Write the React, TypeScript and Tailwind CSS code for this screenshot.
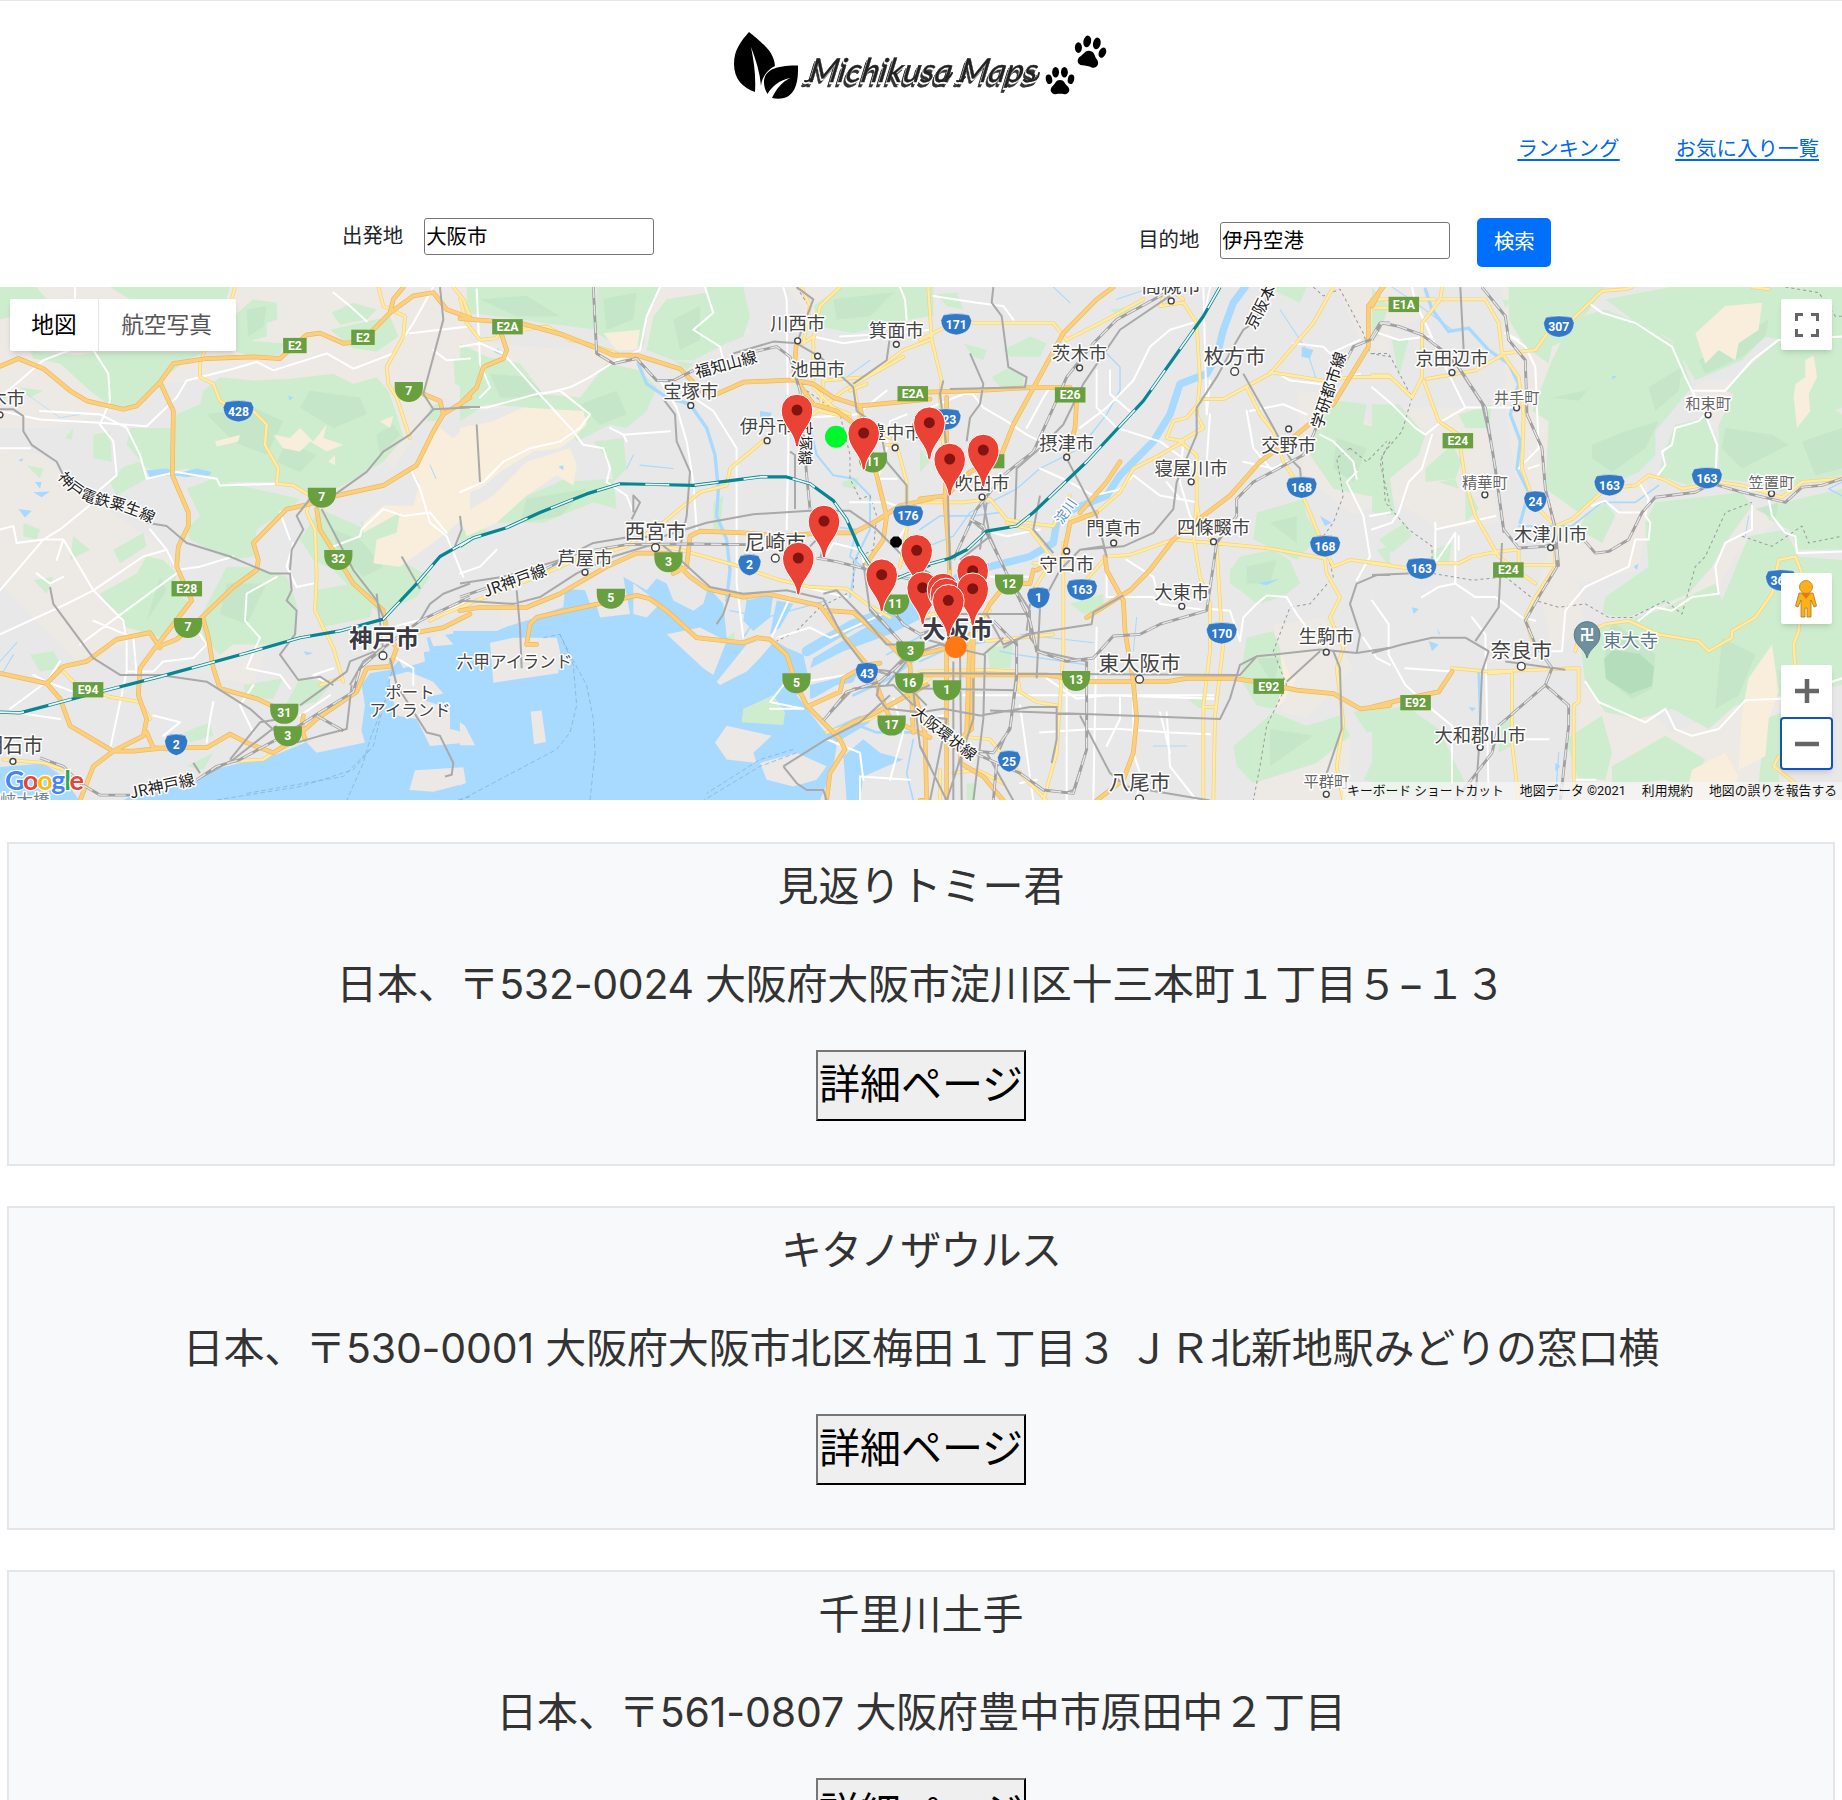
import React from "react";

type Tile = {
  x: number;
  parks?: string[];
  shade?: string[];
  sand?: string[];
  rural?: string[];
  water?: string[];
  islands?: string[];
  greenIslands?: string[];
  streams?: [string, number][];
  white?: string[];
  yellow?: string[];
  orange?: string[];
  rail?: string[];
  jr?: string[];
  teal?: string[];
  border?: string[];
  ferry?: string[];
};

/* Each tile has its own drawing grid: 3 units per pixel across, 2.955 down. */
const tiles: Tile[] = [
  {
    x: 0,
    rural: [
      "0,20 1410,20 1410,160 1330,330 1180,560 900,300 620,300 470,310 420,370 150,440 0,440",
      "0,500 130,520 260,640 500,800 560,1000 420,1060 230,1130 0,900",
      "660,1060 800,1090 760,1200 660,1180",
      "1230,150 1410,90 1410,380 1270,330",
    ],
    parks: [
      "90,212 240,225 300,215 430,215 620,215 560,240 480,300 440,360 400,380 330,375 270,330 180,250 100,235",
      "610,330 660,290 760,300 870,295 1000,280 1060,310 1130,290 1165,330 1190,400 1210,470 1150,540 1100,570 1010,620 930,630 830,600 650,600 560,560 510,570 440,560 380,490 390,440 520,440 530,400 600,370",
      "700,110 760,60 830,70 832,120 800,130 800,170 760,180 740,205 708,190",
      "0,24 110,24 140,60 40,110 0,120", "330,24 690,24 680,60 600,100 520,70 400,66",
      "995,100 1060,70 1130,90 1100,120 1020,135", "990,150 1170,110 1195,170 1130,215 1060,205",
      "710,180 850,190 840,225 760,230 708,215",
      "0,330 20,350 0,370", "60,320 130,330 90,350", "280,460 330,450 335,540 280,530", "195,470 220,440 215,475",
      "330,600 370,555 420,540 440,590 350,640", "80,550 130,560 120,590", "70,720 120,740 110,770 70,760",
      "560,620 640,590 720,610 900,650 880,670 770,740 760,820 690,830 570,770 560,740 600,700",
      "300,930 410,870 440,820 490,830 530,870 520,920 570,960 490,1060 380,1030 330,970",
      "600,1000 680,850 770,850 860,880 890,960 890,1050 830,1080 700,1080 660,1110 610,1060",
      "900,770 960,680 1100,740 1180,820 1290,880 1250,940 1140,990 1070,930 1000,860 940,830",
      "940,920 1060,900 1120,960 1110,1000 960,1030", "1080,720 1210,670 1290,690 1250,760 1130,770",
      "100,890 160,880 140,930", "220,760 270,800 210,830", "340,800 430,750 440,790 360,840",
      "90,1110 160,1100 190,1150 120,1160", "560,1440 640,1400 610,1450", "550,1340 630,1310 640,1350 570,1370",
      "730,1200 850,1180 820,1240 740,1240", "850,1270 900,1180 1000,1190 950,1250", "1360,230 1400,250 1410,330 1365,310",
      "1290,380 1330,360 1330,420 1280,420",
    ],
    shade: [
      "620,400 760,380 850,420 800,520 700,480", "930,330 1080,350 1100,400 1000,440 900,380", "740,90 800,80 790,140 745,170",
      "680,900 800,900 740,1020 660,990", "1130,460 1180,430 1200,460 1140,520", "480,880 500,920 440,1010", "860,480 950,520 900,570 830,540",
      "1000,740 1080,770 1150,850 1090,880 1010,800",
    ],
    sand: [
      "1280,470 1320,440 1360,470 1410,430 1410,690 1350,740 1300,780 1270,800 1200,850 1120,840 1130,770 1190,750 1200,690 1090,750 1090,720 1150,670 1240,670 1260,600 1230,560 1270,520",
      "820,460 870,470 900,440 940,480 980,430 970,470 1030,490 980,510 930,480 900,510 850,500", "645,480 720,460 715,480 650,495",
      "985,540 1005,520 1005,550", "1140,420 1180,405 1170,440",
    ],
    water: [
      "0,1442 130,1432 190,1470 250,1560 0,1560",
      "330,1560 400,1525 590,1482 640,1450 720,1430 830,1405 920,1368 1020,1355 1085,1330 1095,1260 1085,1200 1110,1165 1170,1155 1215,1110 1290,1100 1280,1060 1410,1040 1430,1040 1430,1600 300,1600",
      "440,565 500,560 530,575 590,560 635,570 630,580 560,585 510,580 450,588",
      "105,600 125,600 120,620", "100,630 150,628 125,645", "55,680 95,685 75,705", "55,535 70,530 65,540", "865,345 880,350 868,360", "910,1100 940,1105 920,1112",
    ],
    islands: [
      "1165,1175 1225,1160 1300,1190 1330,1225 1260,1240 1350,1270 1350,1330 1395,1340 1405,1370 1290,1380 1250,1300 1190,1290",
      "1245,1452 1390,1443 1398,1490 1300,1515 1228,1510",
      "920,1370 1080,1320 1095,1370 950,1400", "1290,1060 1330,1045 1360,1080 1300,1085", "1190,1115 1270,1095 1275,1130 1210,1150",
    ],
    streams: [["1290,550 1308,590", 3], ["80,340 180,410 240,400", 2], ["40,1110 10,1160", 3], ["50,1075 0,1130", 3]],
    white: [
      "225,24 225,60 280,210 325,280 330,360 300,430 340,480 350,580 290,630 280,660 180,740 130,770 190,770 280,920 370,1010 380,1070 380,1160 330,1390",
      "0,350 60,300 130,240 210,210", "0,390 120,415 300,425 440,435 530,350 560,300 700,265 770,245 820,270 980,220 1060,265 1180,220 1240,130 1300,24",
      "120,390 300,400 380,440 420,520 440,590", "0,740 40,730 50,780 130,770 0,920", "280,920 430,820 500,800 450,740", "280,920 200,960 0,1050",
      "500,800 530,860 600,850 700,820", "440,590 530,570 650,590 660,610 830,605", "190,770 170,830", "110,870 150,900 190,880",
      "830,880 740,930 735,1010 780,1060 740,1150 840,1170 870,1210", "880,780 860,850 890,910 940,900", "870,770 840,690 880,670",
      "180,1130 140,1190 30,1270", "100,1170 140,1190 220,1220 420,1250", "380,1160 460,1160 490,1130 580,1120 620,1080 600,1050",
      "40,1280 180,1300", "460,1290 540,1310 490,1350", "1230,560 1260,620 1290,720 1340,760 1390,880",
      "1000,790 1080,760 1085,740 1150,680 1210,700 1290,690 1340,750", "1190,1120 1240,1150 1240,1200", "1000,1150 940,1170 990,1200",
      "530,870 350,1000 240,1080", "280,1010 400,1060 410,1170", "0,500 90,500", "1300,210 1340,240 1410,235", "1230,160 1410,140", "1000,40 1050,80 1100,125",
      "640,1250 630,1300 620,1370", "760,1200 720,1260 760,1340", "1190,1025 1290,1000 1390,960", "900,1290 990,1230",
    ],
    yellow: [
      "705,24 690,80 640,140 600,250 600,290 640,310 660,360 690,380 760,390 800,430 795,490 835,560 830,605 880,610 930,640",
      "1135,24 1150,80 1215,110 1210,170 1160,260 1165,310 1190,350 1230,470", "930,640 920,690 945,740 950,880 945,980 1000,1090 1030,1190",
      "180,1150 230,1200 330,1235 420,1250 450,1300", "10,1420 130,1430 190,1450", "700,1425 790,1420 850,1380", "1360,24 1390,60 1410,110",
      "1020,1180 960,1200", "1410,960 1330,990 1290,1010",
    ],
    orange: [
      "0,258 55,235 130,265 210,330 260,360 370,385 410,375 480,305 520,250 620,235 760,230 840,235 920,165 960,160 1030,190 1090,185 1120,150 1170,100 1240,50 1300,40 1340,90 1410,115",
      "480,305 520,390 517,580 565,690 565,730 535,790 530,850 575,950 520,1020 465,1090 420,1150 415,1230 440,1300 430,1350 340,1395 400,1395 500,1385 620,1385 690,1345 740,1370 820,1400 870,1370 950,1300 1070,1220 1100,1150 1170,1145 1190,1090",
      "340,1395 280,1440 240,1541", "0,1165 140,1195 180,1240 210,1320 330,1390", "140,1195 190,1145 260,1130 350,1065 450,1045 480,1090",
      "465,1090 530,1065 600,1005 700,910 770,860 775,830 760,780 860,680 930,665 1010,640 1150,610 1250,550 1300,450 1330,400 1320,360 1270,340", "1330,400 1410,350",
      "610,1005 625,1060 640,1150 660,1210 770,1240 880,1290", "950,680 960,740 1060,900 1150,980 1160,1040", "1190,1090 1160,1050", "440,1340 460,1385 520,1390",
      "910,1290 905,1330 915,1360", "1170,100 1180,60 1210,24", "1220,1050 1330,1030 1410,990",
    ],
    rail: [
      "0,385 40,385 70,405 70,450 95,490 170,540 200,600", "440,720 500,730 560,780 690,820 810,870 870,870 875,920 860,950 890,980 885,1050 840,1110 895,1185 960,1175 1000,1200",
      "870,860 875,800 910,740 890,700 930,650 1000,640 1100,570 1150,510 1230,460 1300,385 1270,340 1330,120 1320,24", "1300,385 1410,380",
      "965,680 1060,860 1130,950 1150,1000", "150,910 160,960 280,1120 360,1170 480,1170 620,1190 750,1270 830,1340", "1205,820 1260,915", "1380,700 1385,740 1365,790",
      "580,1430 600,1460", "830,1320 700,1420 590,1480", "1170,1120 1190,1200 1280,1340 1320,1350 1360,1430 1355,1465 1335,1470",
      "840,1300 780,1310 690,1420", "900,1260 1040,1160 1050,1130 1150,1090", "1410,900 1330,930 1290,960 1260,1010", "890,1370 960,1350 1040,1330 1055,1200",
      "1130,930 1150,1100", "1150,1090 1090,1130 1050,1200",
    ],
    jr: ["120,1415 190,1440 240,1490 300,1525 390,1525", "590,1480 650,1440 720,1420 850,1350 960,1280 1060,1220 1080,1150 1150,1090 1260,1010 1410,940", "950,1290 1030,1335"],
    teal: ["0,1280 60,1282 240,1235 480,1175 740,1105 900,1060 1020,1040 1150,1005 1250,900 1320,820 1410,770"],
    ferry: ["1175,1160 1150,1260 1110,1360 1090,1430 1040,1541", "1110,1390 1060,1450 900,1500 640,1541", "1170,1200 1140,1300 1120,1380 1030,1470 740,1520", "1410,1530 1290,1560"],
  },
  {
    x: 460,
    rural: ["0,180 200,200 440,210 540,230 600,300 400,340 0,400", "560,24 760,24 880,160 700,200 560,200", "980,24 1410,24 1410,140 1180,140 1050,120"],
    parks: [
      "20,24 400,24 410,150 250,130 190,120 20,100", "410,24 600,24 560,110 550,200 460,190 410,160", "620,60 740,40 740,24 850,24 870,110 850,170 800,190 700,240 640,240 560,210 580,110",
      "0,190 80,230 180,250 250,340 360,350 440,250 540,270 590,320 560,390 500,440 450,430 350,480 300,400 200,380 80,370 0,420",
      "400,480 490,470 500,560 460,600 450,540", "300,600 460,590 470,680 400,660 250,720 100,720 60,770 0,780 0,740 80,740 200,640",
      "1060,80 1140,24 1410,24 1410,110 1290,130 1180,160 1080,140", "290,600 320,590 330,640 290,660", "760,660 790,640 780,740 760,740",
      "800,1060 825,1040 820,1095 800,1100", "1145,600 1195,585 1190,620 1150,615", "910,1460 935,1460 925,1500", "640,240 700,250 680,270",
    ],
    shade: ["60,60 200,50 300,110 170,110", "430,60 530,40 520,120 440,150", "90,280 200,290 260,350 120,350", "1120,60 1300,40 1230,110 1130,120", "200,650 380,620 300,700 180,720", "640,120 720,80 720,180 660,210", "360,370 470,330 500,400 420,430"],
    sand: ["0,440 100,420 190,380 370,390 380,430 340,470 300,500 220,510 120,570 60,620 0,640", "200,540 330,500 350,550 340,610 290,580 200,640 110,720 20,760 0,700 100,640", "430,160 540,150 530,210 470,210"],
    water: [
      "0,1040 110,1040 180,1010 310,970 315,915 375,920 390,960 440,965 500,940 490,880 560,920 590,885 620,900 640,950 700,980 730,960 745,910 790,960 800,1060 850,1080 930,1060 980,1090 1030,1110 1050,1200 1010,1230 1080,1320 1130,1380 1120,1440 1080,1541 1100,1600 -20,1600 -20,1040",
      "900,390 935,395 930,410 900,408", "295,555 310,550 310,565", "115,205 125,225 100,215",
      "1060,1120 1250,1010 1410,940 1410,990 1290,1050 1150,1100 1050,1150", "1150,1410 1210,1360 1260,1400 1330,1420 1280,1440 1210,1470 1200,1541 1160,1541",
      "1050,1200 1130,1180 1200,1150 1180,1190 1100,1230 1050,1240", "860,950 940,930 930,1000 880,1040 850,1010", "950,950 1000,960 960,1030 930,1050",
      "1090,1340 1200,1290 1230,1310 1130,1370",
    ],
    islands: [
      "90,1075 160,1060 290,1060 300,1100 295,1165 100,1193", "212,1278 245,1275 258,1368 222,1375", "0,1310 15,1320 45,1378 0,1378",
      "800,1320 935,1350 880,1400 890,1430 800,1420 765,1370", "770,1190 860,1080 960,1050 900,1120 860,1160 780,1200", "620,1050 720,1030 800,1070 760,1170 730,1150",
      "120,980 200,960 230,1000 130,1030", "400,930 500,930 510,990 420,1000", "520,900 600,960 560,1000 520,990", "0,1450 15,1480 0,1500", "900,1430 1010,1400 1100,1440 1070,1480 1000,1500 920,1480",
      "1040,1250 1130,1200 1200,1190 1160,1250 1080,1300",
    ],
    greenIslands: ["845,1310 850,1270 940,1230 975,1280 970,1318"],
    streams: [
      ["535,250 560,310 620,350 690,370 740,440 765,520 775,620 770,700 800,770 810,860 800,950", 10],
      ["1040,390 1070,520 1120,580 1180,590 1230,640 1230,740 1190,820 1170,940", 6], ["1100,730 1190,740 1170,820 1230,870", 5],
      ["1040,1100 1180,1020 1410,940", 30], ["520,520 500,560", 3], ["540,550 640,560", 3], ["860,930 870,1030 850,1060", 5], ["1230,240 1160,290", 3],
      ["1410,1090 1290,1180 1180,1230", 8], ["1360,1360 1340,1460 1360,1541", 5], ["810,980 920,1000 1100,950", 4], ["1280,1110 1410,1040", 5], ["1170,1310 1250,1340 1360,1340", 8],
    ],
    white: [
      "0,200 60,190 130,220 220,320 340,450 370,490 430,500 450,560 440,600 500,640 520,690", "0,630 70,600 130,540 210,500 300,480 360,440 390,400 300,330 230,340 80,380 0,380",
      "600,24 560,110 540,210 470,240 390,290 330,320 250,340", "735,24 760,100 700,150 780,200 790,240", "600,300 650,380 680,480 700,600 710,740",
      "640,310 760,390 830,500 830,900 850,1060", "970,24 980,60 985,500 980,740", "490,460 630,450", "1040,410 1190,400 1280,330",
      "1140,170 1310,160 1410,150", "1060,170 1150,190 1290,170 1300,150", "1170,660 1280,660 1340,680", "1250,590 1310,590", "1030,910 1160,940",
      "930,1270 1030,1270 930,1250 970,1200 1160,1170", "1320,24 1335,60 1340,120", "1360,700 1320,760 1320,820", "1290,1480 1330,1340 1300,1240",
      "1200,1541 1200,1470 1350,1480", "990,940 930,1070", "50,30 60,250 90,320 60,350", "1090,830 1120,780 1200,800 1220,860", "0,870 60,850 110,800",
      "450,440 490,460 500,480", "950,1060 1050,1030 1110,1060 1290,980", "1250,600 1280,500 1290,420 1340,400", "1100,1360 1200,1400 1210,1480",
    ],
    yellow: [
      "0,60 20,130 60,180 110,175 120,150", "1025,24 1050,80 1030,190 1060,170 1060,320 1120,380 1170,400", "1140,24 1080,80 1060,180", "190,150 260,140 330,180 380,190 440,210 470,220",
      "920,470 810,560 800,610 720,630 610,720 500,790 350,830 230,880 0,970", "560,780 660,800 840,850 960,890 1050,910 1160,915 1220,960 1290,1000",
      "1280,490 1310,490 1340,600 1340,740", "1410,180 1330,210 1220,290 1090,300 1080,390 1170,410", "1060,400 1150,330 1330,230", "1170,330 1220,310", "1340,740 1320,850", "1410,1180 1290,1260 1230,1300 1100,1340",
      "1180,310 1200,410 1250,450 1290,470", "1360,900 1350,930",
    ],
    orange: [
      "0,117 180,130 310,165 400,200 460,225 530,225 660,265 730,335 770,340 850,305 1000,298 1060,310 1120,350 1200,375 1410,355",
      "120,150 140,210 130,235 70,260 50,320 0,370", "0,980 60,970 200,970 300,930 440,850 530,810 620,810 690,880 740,915 850,940 920,930 1080,965 1120,1020 1230,1150 1290,1300 1410,1355",
      "200,1080 210,1020 230,1000 320,980 440,955 530,935 570,945 620,980 710,1060 850,1075 890,1060 930,1065 980,1110 1010,1200 1040,1260 1140,1360 1155,1390 1110,1460 1100,1541", "200,1080 230,1080",
      "640,870 680,850 690,760 720,745 850,750 980,760 1080,750 1180,750 1240,720 1320,670 1410,650",
      "1200,380 1240,540 1280,700 1270,770 1220,840", "1050,1260 1140,1220 1150,1180 1220,1140 1260,1135", "1100,980 1180,985 1290,1080 1350,1140 1360,1340", "1000,298 1010,180",
      "1010,300 1060,370 1130,390 1200,440", "1130,1340 1180,1310 1230,1290 1400,1200", "1400,1541 1395,1340 1350,1170",
    ],
    rail: [
      "610,355 645,400 650,480 690,570 680,700 655,820", "400,24 410,220 460,250 530,235 590,300 640,300 700,270", "820,220 940,185 1010,190 1080,230 1180,320 1190,390", "1290,170 1280,240 1180,310",
      "1190,390 1260,440 1280,540 1340,610 1340,680", "0,900 130,880 200,860 300,830 400,780 490,765 610,760 740,720 880,695 1050,685 1170,685 1250,740 1340,830 1410,870",
      "0,950 160,960 240,940 350,870 460,820 560,790 600,780 650,820 750,910 850,930 980,920 1090,945 1150,1060 1220,1150 1290,1170", "170,920 180,1030 185,1150", "50,430 60,600",
      "810,930 790,990 770,1020", "520,690 520,640 540,660 515,710", "990,510 1005,520 1005,680", "1050,790 1100,740 1080,830", "1090,930 1130,920 1210,1000 1280,1080 1330,1080",
      "1210,840 1230,980 1330,1080", "1330,1120 1260,1190 1250,1230 1280,1270 1380,1280", "970,1440 1100,1360 1200,1310 1290,1230", "970,1440 1010,1490 1040,1510 1090,1510 1100,1541", "0,378 60,378",
      "1410,1200 1360,1220 1380,1380 1410,1440", "1010,190 1060,60 1010,24", "1210,1150 1300,1160 1400,1260", "1090,1305 1180,1210 1300,1200 1360,1260", "1280,1200 1340,1130",
    ],
    jr: [
      "400,24 410,220 460,250 530,235 590,300 640,300 700,270", "880,215 950,200 990,230 1020,330 1040,580 1050,680", "0,940 90,910 170,890 230,870 350,810 500,785 690,783 860,785", "1070,825 1130,835 1230,860 1410,900",
      "1290,970 1330,1020 1380,1050 1410,1040", "1090,1305 1160,1220 1260,1190 1340,1120", "1230,970 1330,1080",
    ],
    teal: ["0,790 40,765 140,735 240,690 380,635 480,605 620,608 700,610 900,585 980,585 1050,605 1120,655 1160,710 1200,800 1260,890 1310,885 1410,845"],
    border: ["1040,330 1140,400 1170,520 1170,590 1200,650 1230,640 1250,700 1240,800 1180,830 1180,920 1080,970 1010,1040 950,1070", "1010,24 1040,70 1060,60"],
    ferry: ["250,1060 300,1050 330,1110 380,1200 400,1300 405,1400 390,1541", "300,1050 340,1140 350,1260 330,1340 290,1390 0,1541", "1010,1400 900,1440 730,1541", "1000,1390 900,1420 740,1520"],
  },
  {
    x: 920,
    rural: ["1130,330 1250,340 1410,480 1410,650 1300,700 1150,580", "1060,1020 1210,1000 1300,1150 1160,1300 1090,1280", "1250,24 1410,24 1410,220 1330,200", "1010,1450 1290,1360 1290,1560 1000,1560"],
    parks: [
      "0,24 40,24 40,110 0,100", "50,45 110,40 130,90 80,80", "250,210 330,170 380,190 360,230 270,230", "215,290 260,265 310,280 310,320 250,330", "130,190 200,210 190,240 160,230",
      "1200,400 1260,360 1340,370 1330,430 1410,450 1410,650 1340,640 1240,620 1170,520", "1010,690 1150,650 1160,700 1200,760 1130,830 1000,770", "930,860 960,820 1060,800 1110,830 1140,900 1090,940 1010,960 960,920 930,900",
      "980,1060 1060,1040 1080,1090 1100,1200 1060,1270 1010,1260 960,1180", "940,1380 1060,1280 1160,1320 1260,1290 1290,1350 1190,1430 1000,1490 950,1440", "1040,24 1160,24 1140,70", "570,90 640,80 610,120",
      "200,1090 280,1080 270,1150 210,1150", "450,960 550,930 550,980 490,990", "800,1240 870,1230 840,1270", "140,1490 170,1490 165,1541 140,1541", "0,500 30,540 0,570", "1370,800 1410,790 1410,850", "1300,1280 1410,1250 1410,1330 1340,1340", "1360,1420 1410,1390 1410,1500 1330,1480",
    ],
    shade: ["1250,470 1340,500 1300,600 1240,560", "980,850 1070,830 1050,900 980,900", "1010,1120 1080,1120 1060,1200", "1050,1330 1180,1350 1050,1440", "1050,720 1130,700 1130,780"],
    sand: ["1080,1100 1110,1170 1130,1180 1090,1250 1070,1270 1090,1180"],
    water: ["1145,200 1180,210 1170,235 1145,230", "1015,900 1080,885 1040,905", "1200,700 1235,720 1215,730"],
    streams: [
      ["975,24 940,70 910,150 890,230 860,280 780,310 750,400 700,480 600,580 560,640 460,680 410,720 400,780 330,820 210,850 130,870 0,960", 22],
      ["210,850 100,900 0,990", 14], ["560,220 600,260 600,330 560,400 480,500 360,560 290,620 150,690 100,760 0,800", 4], ["0,740 60,700 160,700 240,690", 5],
      ["1080,90 1160,210 1190,300", 3], ["590,60 700,24", 3], ["240,1100 290,1110 500,1140", 4], ["300,1050 520,1075", 3], ["650,1000 640,1100", 3], ["700,1380 800,1380", 3], ["400,24 450,70", 3],
      ["0,1130 90,1090 210,1070", 6],
    ],
    white: [
      "40,50 170,70 250,80 280,120", "150,330 190,380 260,420 320,460 400,500", "30,380 130,340 210,330", "320,440 370,350 390,320", "480,440 560,380 640,300 690,200 750,150 850,120 870,24",
      "530,270 530,380 590,440 720,480 830,560", "570,270 570,340 640,400", "600,620 640,580 720,640 830,660", "360,560 450,600 520,640 610,620", "790,480 780,600 810,700 850,750",
      "980,390 1000,500 1060,570", "970,540 1060,560 1100,540", "990,390 1090,370 1160,400", "1060,270 1110,300 1200,310 1320,280", "1120,190 1210,200 1230,220 1320,180",
      "530,1030 520,1541", "640,1250 640,1400 660,1460 650,1541", "300,1260 340,1541", "360,1340 520,1330", "500,1330 600,1330 750,1340 870,1345", "130,1230 880,1230", "600,1230 600,1300 560,1380", "740,1280 750,1440 830,1541",
      "620,830 700,880 720,960 870,980", "870,975 930,980 960,1070 970,1000 1010,960 1040,935 1100,940 1130,990 1190,1070", "1310,570 1280,600 1310,660 1330,700 1350,820 1310,890", "870,400 860,540", "300,1490 350,1480",
      "1200,460 1240,480 1300,540 1310,590", "0,1300 70,1290", "740,600 780,650 830,660", "440,1200 440,1541", "180,740 260,760 360,740", "870,300 860,400 850,24", "560,820 560,940 700,940", "700,940 720,960",
      "1350,700 1410,690", "1330,1060 1370,1120 1410,1140", "210,880 340,880", "380,1180 470,1240 560,1230 880,1240", "750,1400 720,1280",
    ],
    yellow: [
      "25,24 35,180 65,300 60,350 70,500", "0,180 80,140 150,130 400,130 440,180 560,120 670,60", "790,60 740,24 720,80 790,70 830,130 840,300 830,400 850,440 780,480 830,520 830,660 840,720 880,780",
      "850,355 910,355 1050,280 1180,130 1240,24", "850,350 800,410 760,420 740,470 790,480 720,520 640,560 600,630 530,690 450,710", "980,320 1020,400 1060,450 1090,540 1130,600 1170,690 1210,790 1240,850 1290,830 1410,845",
      "1050,275 1210,300 1300,290 1410,290", "450,640 400,730 310,720 260,710 210,650 130,660 0,660", "560,820 630,815 760,770 880,780 1040,795 1210,825", "450,900 490,900 560,820", "830,660 820,760 840,880 870,960 870,1100 850,1260 850,1541",
      "890,790 900,960 910,1080 885,1290 880,1541", "850,1265 885,1265", "430,780 430,1100 410,1400 370,1541", "260,720 330,740 400,830", "340,840 390,840 340,920", "0,1160 200,1155 290,1160 300,1220 350,1250 410,1260", "100,1350 210,1360 260,1420 380,1541",
      "1210,790 1220,870 1260,940 1230,1000 1270,1090 1250,1150 1270,1310 1250,1440 1270,1541", "60,1450 60,1541", "0,1000 80,980", "210,980 180,1030 200,1070 400,1050", "100,1460 170,1450 250,1490", "1410,85 1360,85",
    ],
    orange: [
      "580,24 530,60 430,160 330,340 280,430 240,530 150,570 80,640 0,650", "0,335 170,330 340,320 450,320", "470,360 465,440 440,530", "1390,24 1345,80 1345,200 1240,370 1130,460 1020,540 930,640 850,700 760,770 690,860 630,920 500,1000",
      "80,350 80,500 75,660 85,780 90,900", "555,820 560,860 610,950 615,1040 640,1190 650,1300 640,1400 610,1480 530,1541", "0,1170 380,1170 500,1190 740,1190 800,1180 940,1180 1010,1190 1130,1215 1240,1225 1320,1270 1410,1260",
      "340,860 330,900 260,900 210,960 160,1050 155,1330 130,1350 120,1430 190,1470 250,1541", "80,1100 80,1541", "530,690 450,720 430,820 350,860", "150,1050 140,1340", "0,650 80,640", "0,1110 80,1090", "600,540 560,600 480,690", "0,1541 20,1541",
    ],
    rail: [
      "220,24 215,70 245,110 265,260 320,290 315,320 90,325", "150,220 190,310 180,370 150,410 140,480", "70,300 60,340 80,500 90,860", "940,200 970,150 1000,130 1060,24", "940,200 890,290 830,380 830,460 770,600 760,680 700,750 610,790 480,800",
      "970,280 1050,420 1110,530 1140,560 1145,610", "750,50 600,150 490,310 430,430 360,500 290,560 285,710", "190,660 210,760 260,870 330,980 330,1060 360,1100 500,1130", "360,640 340,740 400,810", "0,1010 90,990 330,990",
      "440,530 530,700 560,820 550,790 480,800 420,860 360,970 350,1180", "610,935 520,985 515,1020 320,1050 250,1090", "0,1210 290,1215", "0,1165 960,1170 1010,1115 1200,1095 1310,1105 1410,1090", "210,1275 900,1300 930,1240 960,1140 1010,1115",
      "0,1280 70,1270 180,1290 330,1265 410,1265 410,1360 395,1430", "290,1070 290,1150 270,1320 240,1390", "500,1130 500,1390 460,1510 430,1520", "120,1100 125,1541", "195,1110 190,1300 160,1541", "100,1130 100,1541", "1240,1100 1260,1150 1265,1330 1210,1490",
      "1200,1100 1100,1190", "1370,875 1310,900 1290,960 1320,1050 1310,1105", "480,1290 570,1460 620,1500 870,1541", "150,710 210,760 120,830", "200,660 180,800", "0,1100 60,1080 190,1110 250,1060", "0,1380 80,1541", "0,1060 110,1090", "1410,875 1370,875",
      "30,1541 80,1300 0,1290", "160,1180 160,1300 80,1541", "200,1400 280,1541", "330,960 320,1040", "200,990 250,1080 330,1050",
    ],
    jr: [
      "740,40 590,120 520,190 440,290 400,380 340,510 250,580 170,680 100,830", "1410,130 1380,130 1350,180 1300,200 1230,330 1180,460 1150,520 1000,600 950,650 950,700 890,780 860,980 720,1020 660,1050 580,1055 520,1120 440,1130 350,1100 330,1010 260,870 190,730 150,710",
      "220,1010 290,1080 290,1180 270,1330 220,1400 110,1390 20,1300", "160,1400 300,1460 370,1510 460,1520 500,1390 500,1130", "230,1430 220,1541",
    ],
    teal: ["900,24 850,110 670,360 500,540 340,690 290,730 200,745 140,800 90,825 0,850"],
    border: ["1180,24 1210,50 1260,30 1330,160 1350,220 1410,230", "1410,480 1380,540 1410,670", "1290,500 1250,530 1270,640 1240,720 1210,760 1240,880 1170,960 1110,970 1060,1100 1100,1200 1040,1320 1020,1440 1000,1541", "1290,500 1340,540 1400,480"],
  },
  {
    x: 1372,
    rural: [
      "100,380 340,380 360,600 380,720 200,740 60,650 30,520", "390,24 700,24 620,130 540,240 540,420 520,620 700,660 540,740 430,580 400,380", "840,560 1010,420 950,330 1000,300 1100,300 1060,360 1060,430 860,540",
      "560,700 830,690 800,860 620,900 640,1020 540,1100 500,900", "620,1200 860,1300 900,1340 1100,1260 1230,1240 1150,1541 620,1541", "1140,670 1240,700 1100,800 1020,950 900,980 850,900 990,840",
      "0,24 160,24 140,120 0,160", "720,620 830,600 820,680 760,700",
    ],
    parks: [
      "410,24 700,24 660,80 620,130 600,170 540,200 530,250 460,200 410,120", "600,120 700,90 830,140 920,200 960,320 850,450 850,520 800,570 690,620 620,690 520,620 530,420 480,390 540,240",
      "700,60 900,24 1410,24 1410,380 1290,420 1060,330 1130,260 1220,180 1180,170 1110,240 970,300 900,180 780,120", "880,500 910,430 1000,410 1030,480 1030,570 950,610 860,580", "1040,430 1090,330 1250,300 1410,400 1410,580 1280,600 1230,630 1130,600 1040,590",
      "850,660 1110,630 1140,670 1060,780 1020,850 950,930 850,970 760,1000 690,990 700,940 830,850 820,720", "1170,680 1280,650 1410,620 1410,800 1280,800 1250,740 1190,710", "1050,950 1130,760 1240,740 1280,820 1410,830 1410,1200 1230,1230 1090,1260 1010,1330 900,1270 800,1300 700,1280 640,1200 620,1030 760,1010 860,980 1030,900",
      "640,700 700,660 730,700 690,780 620,740", "260,400 360,370 350,440 280,440", "160,560 240,490 270,540 250,590 160,600", "0,370 80,370 160,460 140,520 40,600 0,580", "200,600 250,590 260,620", "0,500 50,560 70,700 0,690", "20,770 100,720 120,760 60,810", "0,1280 100,1260 200,1330 280,1490 0,1541",
      "380,1310 420,1300 420,1380 380,1400", "580,1360 690,1290 720,1400 700,1480 620,1480", "720,1440 880,1350 1000,1420 950,1500 880,1480 720,1500", "1180,1300 1230,1280 1220,1500 1160,1490", "420,80 470,70 480,130", "180,800 240,780 230,840 180,830", "280,600 320,680 280,720", "0,24 50,80 20,170 0,170", "60,180 110,180 80,290",
      "390,60 415,65 400,85",
    ],
    shade: [
      "660,490 760,450 860,420 820,500 720,570 660,530", "540,350 640,330 660,310 620,360", "980,240 1190,120 1180,170 1110,230 1000,280", "830,320 930,260 920,330 850,390", "1060,440 1200,460 1250,490 1110,560 1050,500",
      "1050,1060 1150,1110 1100,1230 1030,1270", "1290,480 1410,440 1410,560 1330,580", "1150,680 1220,660 1210,710", "720,1010 850,1110 840,1210 780,1240 700,1180 700,1110",
    ],
    sand: ["970,160 1060,80 1170,70 1160,150 1100,190 1090,240 1040,210 1000,250", "1300,240 1325,225 1335,290 1310,340 1315,390 1275,440 1265,350 1270,310 1300,290", "1130,1180 1200,1080 1220,1220 1190,1300 1180,1410 1100,1450 1110,1280", "960,1450 1060,1400 1100,1470 1060,1541 940,1541"],
    water: ["720,285 735,288 722,297", "120,970 140,975 125,990", "170,1070 200,1080 180,1100", "290,1265 312,1268 300,1278", "195,1030 205,1050 200,1050", "550,1430 565,1440 550,1455", "800,840 795,860 785,850"],
    streams: [
      ["160,30 180,90 230,155 290,145 350,210 410,250 440,310 415,400 445,480 435,560 470,630 445,720", 10], ["440,730 600,730 690,660 790,660 860,610", 5], ["1410,600 1370,620 1410,640", 4], ["320,1160 325,1300", 8], ["1130,700 1120,760", 3], ["60,24 130,70 240,150", 3], ["560,1400 550,1541", 4],
    ],
    white: [
      "650,70 690,100 790,130 900,200 940,290 960,330 1060,330 1140,240 1220,180 1410,170", "960,330 1000,400 980,420 910,440 900,490 870,510 880,550 850,590", "1000,400 1035,490 1030,580", "660,670 700,655 740,690 820,690",
      "820,700 835,720 830,770 790,770 770,850 640,910 580,980 570,1100 540,1100", "800,600 830,650 820,700", "1190,650 1200,700 1240,750 1270,760 1275,810 1410,805", "1140,670 1140,740 1060,780 1030,850 1040,930 960,940 900,980 850,970 800,1010",
      "0,320 60,370 130,440 160,460 210,420 280,380 440,380", "180,460 150,560 110,600 80,690 60,720 0,740", "190,720 190,740 370,700", "190,745 190,840 250,750 250,900 200,910 150,940", "250,900 310,940 370,940 450,1000 490,1010",
      "0,950 50,1020 50,1110 100,1200 190,1280 240,1320 240,1490", "300,1000 340,1050 350,1541", "640,1190 680,1250 820,1310 880,1270 910,1330 960,1350 1040,1330 1120,1245 1230,1240", "160,130 210,240 280,380", "120,24 130,70 170,150", "440,180 400,160 460,200 490,260 500,500 440,560", "450,1360 530,1360", "600,1480 670,1480",
      "1410,1180 1380,1190", "260,800 260,760", "100,1150 240,1160", "20,160 80,180 170,170", "470,560 500,550",
    ],
    yellow: [
      "210,24 205,60 150,130 150,290 120,350 50,285 0,285", "0,60 60,60 190,60", "210,60 340,60 380,130 390,220 440,290 455,400 450,560 490,670 550,730", "390,225 310,270 165,295", "390,220 490,210 530,155 600,120 690,35 760,30 780,24",
      "155,300 200,420 260,460 280,600 310,700 380,820 490,900", "0,840 110,855 180,840 260,840 300,820 380,805 440,800 440,845 550,845", "550,730 550,850 490,940 460,1000 490,1100", "550,730 600,710 700,620 790,610 830,580 870,590 930,620 1040,600 1110,610 1230,645 1290,600 1410,590",
      "240,1150 350,1160 620,1150 620,1250 605,1260 605,1541", "350,1165 420,1160 420,1370 440,1541", "610,1100 620,1060 700,1020 770,1010 860,1050 980,1070 1010,1100 1080,1060 1080,1040 1150,1000 1200,930 1220,830 1270,820 1290,870 1280,1040 1265,1080 1270,1150", "1220,1410 1205,1440 1270,1490 1230,1541",
      "1140,24 1190,30", "440,800 440,845",
    ],
    orange: ["240,1160 200,1220 100,1240 0,1265", "0,80 30,24"],
    rail: ["265,24 275,210", "330,24 400,110 410,180 460,240 465,400 510,500 520,620 550,730", "0,875 110,870", "0,1105 90,1080 180,1060 280,1060 350,1100 330,1160 320,1400 310,1541", "390,780 380,970 310,1070", "400,1130 580,1155", "200,200 250,260", "230,220 330,370 360,500 395,750"],
    jr: [
      "0,180 30,130 80,140 150,165 210,210 260,260 340,380 370,560 395,740 440,795 520,790 550,780 555,850 500,940 460,1010 490,1080 540,1150 520,1200 590,1260 590,1320 565,1541", "520,1200 380,1320 360,1400 290,1490 250,1541", "330,24 400,110 410,180 460,240 465,400 510,500 520,620 550,740 560,850", "635,770 670,810 710,805 770,770 810,690 850,645 970,630 1020,605 1110,630 1240,660 1290,615 1350,610 1410,590",
    ],
    border: [
      "0,220 50,220 120,350 90,450 30,520 40,660 110,740 180,790 180,870 300,890 400,880 490,950 560,970 640,960 710,1000 780,1000 880,950 930,990 970,850 1000,820 1060,690 1140,660", "1110,760 1200,790 1290,730 1310,780 1410,760", "1240,24 1340,40 1390,110 1410,110",
    ],
  },
];

const d = (pts: string) => "M" + pts.split(" ").join("L");

function Layer({ pick, ...style }: { pick: (t: Tile) => string[] | undefined } & React.SVGProps<SVGPathElement>) {
  return (
    <>
      {tiles.map((t) => (
        <path
          key={t.x}
          transform={`translate(${t.x} 280) scale(0.33333 0.33841)`}
          d={(pick(t) ?? []).map(d).join("")}
          fill="none"
          strokeLinejoin="round"
          {...style}
        />
      ))}
    </>
  );
}

type Place = [string, number, number, number, (number | null)?, (number | null)?, string?];
/* name, centre x, centre y, size, dot x, dot y, colour */
const places: Place[] = [
  ["三木市", -2, 340, 15.6, 0, 354], ["川西市", 679, 276, 15.6, 679, 291], ["池田市", 696, 315, 15.6, 696, 304], ["箕面市", 763, 282, 15.6, 763, 294],
  ["宝塚市", 588, 334, 15.6, 588, 346], ["伊丹市", 653, 364, 15.6, 653, 376], ["豊中市", 762, 369, 15.6, 762, 382], ["高槻市", 997, 244, 17, 997, 257],
  ["茨木市", 919, 302, 15.6, 919, 314], ["枚方市", 1051, 304, 17.5, 1051, 317], ["摂津市", 908, 378, 15.6, 908, 390], ["吹田市", 836, 412, 15.6, 836, 424],
  ["寝屋川市", 1014, 400, 15.6, 1014, 411], ["交野市", 1097, 380, 15.6, 1097, 366], ["門真市", 948, 451, 15.6, 948, 463], ["四條畷市", 1033, 450, 15.6, 1033, 462],
  ["守口市", 908, 481, 15.6, 908, 470], ["大東市", 1006, 505, 15.6, 1006, 517], ["東大阪市", 970, 566, 17.5, 970, 579], ["生駒市", 1129, 543, 15.6, 1129, 556],
  ["八尾市", 970, 667, 17.5, 970, 681], ["平群町", 1129, 666, 13, 1129, 677], ["西宮市", 558, 453, 17.5, 558, 467], ["芦屋市", 498, 476, 15.6, 498, 488],
  ["尼崎市", 660, 463, 17.5, 660, 476], ["京田辺市", 1236, 306, 15.6, 1236, 318], ["井手町", 1291, 339, 13, 1291, 348], ["精華町", 1264, 412, 13, 1264, 422],
  ["和束町", 1454, 344, 13, 1454, 354], ["笠置町", 1508, 412, 13, 1508, 421], ["木津川市", 1320, 456, 15.6, 1320, 467], ["奈良市", 1295, 555, 17.5, 1295, 568],
  ["大和郡山市", 1260, 627, 15.6, 1260, 637], ["明石市", 11, 636, 17, 11, 649], ["六甲アイランド", 438, 564, 14.2], ["ポート", 349, 590, 14], ["アイランド", 349, 605, 14],
  ["東大寺", 1388, 546, 15.6, null, null, "#5a7a8a"], ["海峡大橋", 14, 682, 14, null, null, "#6f8794"],
];
const bigPlaces: Place[] = [["神戸市", 327, 544, 20, 326, 559], ["大阪市", 815, 537, 20]];

/* name, centre x, centre y, rotation, size */
const lines: [string, number, number, number, number][] = [
  ["JR神戸線", 438, 495, -20, 13.5], ["JR神戸線", 138, 670, -12, 13.5], ["福知山線", 618, 311, -15, 13.5],
  ["学研都市線", 1131, 333, -72, 13.5], ["京阪本", 1073, 262, -63, 13.5], ["大阪環状線", 804, 625, 38, 13],
];

const routes: [string, number, number][] = [["E2", 251, 295], ["E2", 309, 288], ["E2A", 432, 279], ["E28", 159, 502], ["E94", 75, 588], ["E2A", 777, 336], ["E26", 911, 337], ["E1A", 1195, 260], ["E24", 1241, 376], ["E24", 1284, 486], ["E92", 1080, 585], ["E92", 1205, 599]];
const greens: [string, number, number][] = [["7", 348, 334], ["7", 274, 424], ["32", 288, 477], ["7", 160, 535], ["31", 242, 608], ["3", 245, 627], ["5", 520, 510], ["3", 569, 479], ["5", 678, 582], ["3", 775, 555], ["16", 774, 582], ["17", 759, 618], ["1", 806, 588], ["13", 916, 580], ["12", 859, 498], ["11", 762, 515], ["11", 743, 394]];
const blues: [string, number, number][] = [["428", 203, 351], ["2", 150, 635], ["2", 638, 482], ["43", 738, 574], ["176", 773, 440], ["171", 814, 277], ["423", 805, 358], ["163", 921, 503], ["1", 884, 510], ["25", 859, 649], ["168", 1108, 416], ["168", 1128, 466], ["170", 1040, 540], ["163", 1210, 485], ["24", 1307, 428], ["163", 1370, 414], ["163", 1453, 408], ["307", 1327, 279], ["369", 1516, 495]];

const markers: [number, number][] = [[797, 411], [929.3, 423.7], [863.7, 434], [983.3, 451], [949.7, 460], [824, 522], [798.3, 559], [916.7, 551.3], [881.7, 575.7], [972.7, 571.7], [922.7, 588.7], [943, 590], [946, 595], [972.7, 589.7], [948.3, 601.3]];

const jp = "font-['Noto_Sans_CJK_JP',sans-serif]";

function Halo({ text, x, y, size, fill = "#333", bold, rot }: { text: string; x: number; y: number; size: number; fill?: string; bold?: boolean; rot?: number }) {
  return (
    <text x={x} y={y + size * 0.36} fontSize={size} textAnchor="middle" fill={fill} stroke="#fff" strokeWidth={2.6} strokeLinejoin="round" paintOrder="stroke" fontWeight={bold ? 700 : 400} transform={rot ? `rotate(${rot} ${x} ${y})` : undefined}>
      {text}
    </text>
  );
}

function Dot({ p }: { p: Place }) {
  if (p[4] == null) return null;
  return <circle cx={p[4]} cy={p[5] as number} r={p[3] > 17 ? 3.3 : 2.5} fill="#fff" stroke="#444" strokeWidth={1.2} />;
}

function MapDrawing() {
  return (
    <svg className={`block h-full w-full ${jp}`} viewBox="0 288 1842 513" preserveAspectRatio="none">
      <defs>
        <path id="ao-line" d="M49 407Q62 427 90 432Q112 437 130 447" />
      </defs>
      <rect x="0" y="288" width="1842" height="513" fill="#e8e8e8" />
      <Layer pick={(t) => t.rural} fill="#ede9e5" />
      <Layer pick={(t) => t.parks} fill="#ceedcf" />
      <Layer pick={(t) => t.shade} fill="#c3e4c6" opacity={0.8} />
      <Layer pick={(t) => t.sand} fill="#f9eedb" />
      <Layer pick={(t) => t.water} fill="#a8d9ff" />
      <Layer pick={(t) => t.islands} fill="#ebe8e5" />
      <Layer pick={(t) => t.greenIslands} fill="#ceedcf" />
      <path d="M1613 651L1640 655L1654 668L1652 687L1630 695L1606 680L1604 660Z" fill="#b4debb" />
      {tiles.map((t) => (
        <g key={t.x} transform={`translate(${t.x} 280) scale(0.33333 0.33841)`} fill="none" stroke="#a8d9ff" strokeLinejoin="round" strokeLinecap="round">
          {(t.streams ?? []).map(([p, w]) => <path key={p} d={d(p)} strokeWidth={w} />)}
        </g>
      ))}
      <Layer pick={(t) => t.ferry} stroke="#86b4e3" strokeWidth={2.5} strokeDasharray="14 8" />
      <Layer pick={(t) => t.border} stroke="#9a9a9a" strokeWidth={3} strokeDasharray="9 9" />
      <Layer pick={(t) => t.white} stroke="#fff" strokeWidth={6} strokeLinecap="round" />
      <Layer pick={(t) => t.yellow} stroke="#f3d27c" strokeWidth={11} strokeLinecap="round" />
      <Layer pick={(t) => t.yellow} stroke="#ffeba3" strokeWidth={7} strokeLinecap="round" />
      <Layer pick={(t) => t.orange} stroke="#f1b65c" strokeWidth={14} strokeLinecap="round" />
      <Layer pick={(t) => t.orange} stroke="#fbd07d" strokeWidth={10} strokeLinecap="round" />
      <Layer pick={(t) => t.rail} stroke="#a9a9a9" strokeWidth={6} />
      <Layer pick={(t) => t.jr} stroke="#a0a0a0" strokeWidth={8.5} />
      <Layer pick={(t) => t.jr} stroke="#e6e6e6" strokeWidth={4} strokeDasharray="32 20" />
      <Layer pick={(t) => t.teal} stroke="#078592" strokeWidth={9.5} />
      <Layer pick={(t) => t.teal} stroke="#eef9f9" strokeWidth={5} strokeDasharray="72 76" />

      <g transform="scale(1.17474)">
        {lines.map(([t, x, y, r, s]) => <Halo key={t + x} text={t} x={x} y={y} rot={r} size={s} fill="#222" />)}
        <text fontSize={13} fill="#222" stroke="#fff" strokeWidth={2.4} strokeLinejoin="round" paintOrder="stroke"><textPath href="#ao-line">神戸電鉄粟生線</textPath></text>
        <text x={685} y={378} fontSize={12.5} fill="#222" stroke="#fff" strokeWidth={2} paintOrder="stroke" textAnchor="middle" transform="rotate(90 685 378)" dy={4}>宝塚線</text>
        <Halo text="淀川" x={907} y={436} size={11.5} rot={-55} fill="#5590cc" />
        {places.map((p) => (
          <g key={p[0]}><Dot p={p} /><Halo text={p[0]} x={p[1]} y={p[2]} size={p[3]} fill={p[6] ?? (p[3] === 13 ? "#666" : "#444")} /></g>
        ))}
        {bigPlaces.map((p) => (
          <g key={p[0]}><Dot p={p} /><Halo text={p[0]} x={p[1]} y={p[2]} size={p[3]} bold fill="#3a3a44" /></g>
        ))}
        <g fontFamily="Roboto, sans-serif" fontWeight={700} fontSize={10.4} fill="#fff" textAnchor="middle">
          {routes.map(([t, x, y]) => {
            const w = t.length === 2 ? 20 : 26;
            return <g key={t + x}><rect x={x - w / 2} y={y - 6.5} width={w} height={13} fill="#689f3f" /><text x={x} y={y + 3.7}>{t}</text></g>;
          })}
          <rect x={844} y={387.500} width={11} height={12} fill="#689f3f" />
          {greens.map(([t, x, y]) => (
            <g key={t + x}><path d={`M${x - 12} ${y - 8}h24v4.500c0 8-5.500 12.500-12 12.500s-12-4.500-12-12.500z`} fill="#689f3f" /><text x={x} y={y + 3.4}>{t}</text></g>
          ))}
          {blues.map(([t, x, y]) => {
            const w = t.length === 3 ? 13 : 9.8;
            return <g key={t + x}><path d={`M${x - w + 2} ${y - 8}q${w - 2} -2.500 ${(w - 2) * 2} 0l2 4.500c-.5 8-5 11.500-${w} 12.500c-${w - 5}-1-${w - 0.5}-4.500-${w}-12.500z`} fill="#3178c6" stroke="#fff" strokeWidth={0.4} /><text x={x} y={y + 3.6}>{t}</text></g>;
          })}
        </g>
        <path d="M1351 561c-2-9-11-10-11-20a11 11 0 0 1 22 0c0 10-9 11-11 20z" fill="#6f8f9f" stroke="#507080" strokeWidth={0.7} />
        <text x={1351} y={545.5} fontSize={12.5} fontWeight={700} textAnchor="middle" fill="#fff">卍</text>
      </g>

      <circle cx="836" cy="437.7" r="11" fill="#00f72c" />
      <path d="M893.500 537.500h5l3.300 3.500v4l-3.300 3.500h-5l-3.300-3.500v-4z" fill="#000" />
      {markers.map(([x, y]) => (
        <g key={`${x}-${y}`} transform={`translate(${x} ${y})`}>
          <path d="M-1.500 36C-2.500 21-15.800 15.500-15.800 0a15.800 15.800 0 0 1 31.600 0C15.800 15.500 2.500 21 1.500 36Q0 38-1.500 36z" fill="#ea4335" stroke="#fff" strokeWidth="1" />
          <circle r="5.500" fill="#811411" />
        </g>
      ))}
      <circle cx="955.700" cy="648" r="11" fill="#ff7814" />
      <text x="5" y="791" fontSize="27" fontFamily="Lato, sans-serif" fontWeight="700" stroke="#fff" strokeWidth="2.500" paintOrder="stroke" textLength="79">
        <tspan fill="#4285f4">G</tspan><tspan fill="#ea4335">o</tspan><tspan fill="#fbbc04">o</tspan><tspan fill="#4285f4">g</tspan><tspan fill="#34a853">l</tspan><tspan fill="#ea4335">e</tspan>
      </text>
    </svg>
  );
}

function Paw({ x, y, s, r }: { x: number; y: number; s: number; r: number }) {
  return (
    <g transform={`translate(${x} ${y}) rotate(${r}) scale(${s})`}>
      <ellipse cx="-12.500" cy="-2" rx="3.600" ry="5.500" transform="rotate(-12 -12.500 -2)" />
      <ellipse cx="-5" cy="-10" rx="3.900" ry="6" />
      <ellipse cx="5" cy="-10" rx="3.900" ry="6" />
      <ellipse cx="12.500" cy="-2" rx="3.600" ry="5.500" transform="rotate(12 12.500 -2)" />
      <path d="M0-1c5 0 5 4 8 6.500c5 4 2 10-3 9.500c-3-.5-7-.5-10 0c-5 .5-8-5.500-3-9.500c3-2.500 3-6.500 8-6.500z" />
    </g>
  );
}

function Logo() {
  return (
    <svg className="-ml-[3px] block" width="380" height="76" viewBox="730 28 380 76">
      <path d="M749 32C741 41 734 50 734 64c0 15 9 24 21 28c1-16-1-30-4-45c5 13 9 26 10 39c1-9 6-16 14-20C774 51 762 43 749 32z" />
      <path d="M798 65.500c-17 0-34 2-34 17c0 5 2 9 3.500 11.500C772 86 780 80 790 78c-8 4-14 11-18 20c16 3 27-4 26-32.500z" />
      <g className="[filter:drop-shadow(-1px_2px_0_#fff)_drop-shadow(-1.500px_3px_0_#333)]">
        <text transform="translate(808 82) skewX(-10)" fontFamily="Lato, sans-serif" fontStyle="italic" fontSize="33" fontWeight="400" textLength="228" lengthAdjust="spacingAndGlyphs" fill="#222" stroke="#222" strokeWidth=".4">Michikusa Maps</text>
        <path d="M805 81q4 1 8-4M939 81q9 1 13-8M957 81q4 1 8-4M1030 81q8 0 9-8" fill="none" stroke="#222" strokeWidth="2" strokeLinecap="round" />
      </g>
      <Paw x={1090} y={52} s={0.98} r={12} />
      <Paw x={1060} y={81} s={0.88} r={0} />
    </svg>
  );
}

function Card({ title, address, titleSpacing, spacing }: { title: string; address: string; titleSpacing: string; spacing: string }) {
  return (
    <section className="flex h-[324px] shrink-0 flex-col items-center border-2 border-[#e4e6e9] bg-[#f8f9fb] text-[41px] leading-[62px] text-[#333]">
      <h2 className={`mt-[11px] ${titleSpacing}`}>{title}</h2>
      <p className={`mt-[36px] whitespace-pre ${spacing}`}>{address}</p>
      <button className="mt-[35px] flex h-[71px] w-[210px] items-center justify-center whitespace-nowrap border-2 border-t-[#767676] border-l-[#767676] border-r-black border-b-black bg-[#efefef] pb-[3px] text-black">
        詳細ページ
      </button>
    </section>
  );
}

export default function App() {
  return (
    <div className="flex h-[1800px] w-[1842px] flex-col overflow-hidden border-t border-[#e5e5e5] bg-white font-['Inter','Noto_Sans_CJK_JP',sans-serif] text-[20.400px] text-[#212529]">
      <header className="flex h-[129px] shrink-0 justify-center pt-[27px]">
        <Logo />
      </header>
      <nav className="flex h-[40px] shrink-0 justify-end gap-[56px] pr-[23px] text-[20.500px] leading-[38px] text-[#0068ee] underline underline-offset-[3px]">
        <a href="#ranking">ランキング</a>
        <a href="#favorites">お気に入り一覧</a>
      </nav>
      <form className="flex h-[117px] shrink-0 pt-[48px]">
        <label className="flex h-[37px] items-center pl-[342px]">
          出発地
          <input readOnly className="ml-[21px] h-[37px] w-[230px] rounded-[3px] border border-[#767676] pb-[3px] pl-[1px] text-black" value="大阪市" />
        </label>
        <label className="mt-[4px] flex h-[37px] items-center pl-[484px]">
          目的地
          <input readOnly className="ml-[21px] h-[37px] w-[230px] rounded-[3px] border border-[#767676] pb-[3px] pl-[1px] text-black" value="伊丹空港" />
        </label>
        <button type="button" className="ml-[27px] flex h-[49px] w-[74px] items-center justify-center rounded-[5px] bg-[#0070fc] text-white">検索</button>
      </form>

      <div className="relative h-[513px] shrink-0 overflow-hidden">
        <MapDrawing />
        <div className="absolute left-[10px] top-[12px] flex h-[52px] items-center rounded-[2px] bg-white text-[22.700px] text-[#565656] shadow-md">
          <span className="flex h-full w-[89px] items-center justify-center border-r border-[#e6e6e6] text-black">地図</span>
          <span className="flex h-full w-[137px] items-center justify-center pr-[2px]">航空写真</span>
        </div>
        <button className="absolute right-[10px] top-[12px] flex size-[51px] items-center justify-center rounded-[2px] bg-white shadow-md">
          <svg width="24" height="24" viewBox="0 0 24 24" fill="none" stroke="#666" strokeWidth="3">
            <path d="M1.500 8V1.500H8M16 1.500h6.500V8M22.500 16v6.500H16M8 22.500H1.500V16" />
          </svg>
        </button>
        <button className="absolute right-[10px] top-[286px] flex size-[51px] items-center justify-center rounded-[2px] bg-white pr-[2px] shadow-md">
          <svg width="24" height="40" viewBox="0 0 24 40">
            <path d="M5 14h14l3.500 13l-2.500 1l-3-7v17h-4v-9h-2v9H7V21l-3 7l-2.500-1z" fill="#fbb117" stroke="#a8762a" strokeWidth=".8" />
            <path d="M7.500 14.500h9L12 20z" fill="#e67817" />
            <circle cx="12" cy="8" r="6.500" fill="#fbb117" stroke="#b57d24" strokeWidth=".8" />
          </svg>
        </button>
        <div className="absolute right-[10px] top-[378px] w-[51px] rounded-[2px] bg-white shadow-md">
          <button className="flex h-[52px] w-full items-center justify-center">
            <svg width="24" height="24" viewBox="0 0 24 24" stroke="#666" strokeWidth="4.500"><path d="M0 12h24M12 0v24" /></svg>
          </button>
          <button className="-mx-px flex h-[53px] w-[53px] items-center justify-center rounded-[4px] border-2 border-[#1052c8] bg-white">
            <svg width="24" height="24" viewBox="0 0 24 24" stroke="#666" strokeWidth="4.500"><path d="M0 12h24" /></svg>
          </button>
        </div>
        <div className="absolute bottom-0 right-0 flex h-[18px] items-center gap-[16px] whitespace-nowrap bg-[#f5f5f5]/75 pl-[4px] pr-[5px] text-[12.800px] leading-[18px] text-[#111] font-['Roboto','Noto_Sans_CJK_JP',sans-serif]">
          <span>キーボード ショートカット</span>
          <span>地図データ ©2021</span>
          <span>利用規約</span>
          <span>地図の誤りを報告する</span>
        </div>
      </div>

      <main className="flex shrink-0 flex-col gap-[40px] px-[7px] pt-[42px]">
        <Card title="見返りトミー君" address="日本、〒532-0024 大阪府大阪市淀川区十三本町１丁目５−１３" titleSpacing="tracking-normal" spacing="tracking-[-0.27px]" />
        <Card title="キタノザウルス" address="日本、〒530-0001 大阪府大阪市北区梅田１丁目３ ＪＲ北新地駅みどりの窓口横" titleSpacing="tracking-[-0.8px]" spacing="tracking-[-0.16px]" />
        <Card title="千里川土手" address="日本、〒561-0807 大阪府豊中市原田中２丁目" titleSpacing="tracking-normal" spacing="tracking-[-0.13px]" />
      </main>
    </div>
  );
}
